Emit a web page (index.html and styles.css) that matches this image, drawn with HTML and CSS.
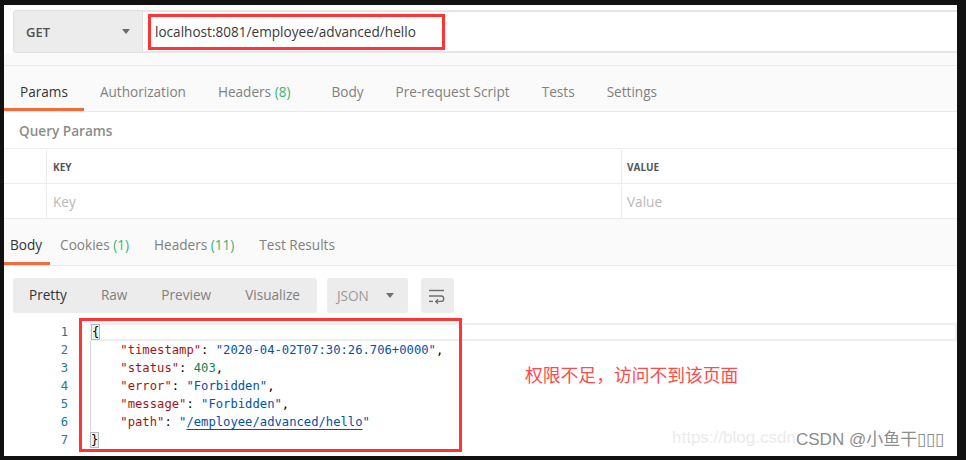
FILE: index.html
```html
<!DOCTYPE html>
<html lang="zh-CN">
<head>
    <meta charset="UTF-8">
    <title>Postman - 403</title>
    <link rel="stylesheet" href="styles.css">
</head>
<body>

<div class="app">
    <!-- request line -->
    <div class="request-bar">
        <div class="method">GET <span class="caret"></span></div>
        <div class="url">localhost:8081/employee/advanced/hello</div>
    </div>

    <div class="req-area">
        <div class="tabs req-tabs">
            <div class="tab active">Params</div>
            <div class="tab">Authorization</div>
            <div class="tab">Headers <span class="count">(8)</span></div>
            <div class="tab">Body</div>
            <div class="tab">Pre-request Script</div>
            <div class="tab">Tests</div>
            <div class="tab">Settings</div>
        </div>
    </div>

    <div class="query-title">Query Params</div>
    <div class="params-table">
        <div class="prow head">
            <div class="pcell check"></div>
            <div class="pcell key">KEY</div>
            <div class="pcell value">VALUE</div>
        </div>
        <div class="prow">
            <div class="pcell check"></div>
            <div class="pcell key placeholder">Key</div>
            <div class="pcell value placeholder">Value</div>
        </div>
    </div>

    <!-- response -->
    <div class="tabs res-tabs">
        <div class="tab active">Body</div>
        <div class="tab">Cookies <span class="count">(1)</span></div>
        <div class="tab">Headers <span class="count">(11)</span></div>
        <div class="tab">Test Results</div>
    </div>

    <div class="toolbar">
        <div class="view-group">
            <div class="view active">Pretty</div>
            <div class="view">Raw</div>
            <div class="view">Preview</div>
            <div class="view">Visualize</div>
        </div>
        <div class="format">JSON <span class="caret"></span></div>
        <div class="wrap-btn">
            <svg width="18" height="16" viewBox="0 0 18 16" fill="none" stroke="#707070" stroke-width="1.4">
                <path d="M1 2.5H16"/>
                <path d="M1 8H13a2.7 2.7 0 0 1 0 5.4H8"/>
                <path d="M10 11.2L7.8 13.4L10 15.6"/>
                <path d="M1 13.4H5"/>
            </svg>
        </div>
    </div>

    <div class="editor">
        <div class="gutter">
            <div>1</div><div>2</div><div>3</div><div>4</div><div>5</div><div>6</div><div>7</div>
        </div>
        <div class="code">
            <div class="line current"><span class="bracket">{</span></div>
            <div class="line guide">    <span class="k">"timestamp"</span>: <span class="s">"2020-04-02T07:30:26.706+0000"</span>,</div>
            <div class="line guide">    <span class="k">"status"</span>: <span class="n">403</span>,</div>
            <div class="line guide">    <span class="k">"error"</span>: <span class="s">"Forbidden"</span>,</div>
            <div class="line guide">    <span class="k">"message"</span>: <span class="s">"Forbidden"</span>,</div>
            <div class="line guide">    <span class="k">"path"</span>: <span class="s">"<span class="link">/employee/advanced/hello</span>"</span></div>
            <div class="line"><span class="bracket">}</span></div>
        </div>
    </div>

    <!-- annotations -->
    <div class="mark url-mark"></div>
    <div class="mark code-mark"></div>
    <div class="note">权限不足，访问不到该页面</div>
    <div class="wm-url">https://blog.csdn</div>
    <div class="wm-name">CSDN @小鱼干▯▯▯</div>
</div>

</body>
</html>
```

FILE: styles.css
```css
body {
    margin: 0;
    padding: 5px 9px 4px 4px;
    background-color: #111;
    font-family: "Open Sans", "Noto Sans", sans-serif;
    font-size: 13.6px;
    color: #808080;
    overflow: hidden;
}

.app {
    position: relative;
    height: 451px;
    background-color: #fff;
    overflow: hidden;
}

/* request line */
.request-bar {
    display: flex;
    height: 48px;
    padding-top: 5px;
    box-sizing: border-box;
}

.method {
    width: 130px;
    margin-left: 9px;
    display: flex;
    align-items: center;
    justify-content: space-between;
    padding: 0 12px;
    box-sizing: border-box;
    background-color: #ececec;
    border: 1px solid #e0e0e0;
    border-radius: 3px 0 0 3px;
    font-size: 13px;
    font-weight: 600;
    color: #505050;
}

.caret {
    width: 0;
    height: 0;
    border-left: 4px solid transparent;
    border-right: 4px solid transparent;
    border-top: 5px solid #6b6b6b;
}

.url {
    flex: 1;
    display: flex;
    align-items: center;
    padding-left: 12px;
    border-top: 2px solid #e6e6e6;
    border-bottom: 2px solid #e6e6e6;
    color: #3a3a3a;
}

/* tabs */
.req-area {
    background-color: #fafafa;
    padding-top: 12px;
}

.tabs {
    display: flex;
    background-color: #fafafa;
    border-top: 1px solid #ececec;
    border-bottom: 1px solid #e8e8e8;
}

.tab {
    height: 45px;
    padding: 17px 16px 0;
    box-sizing: border-box;
    line-height: 18px;
    border-bottom: 3px solid transparent;
    white-space: nowrap;
}

.tab.active {
    color: #333;
    border-bottom-color: #f26b3a;
}

.count {
    color: #3cb371;
}

.req-tabs .count {
    margin-right: 9px;
}

.res-tabs {
    border-top: none;
    height: 47px;
    box-sizing: border-box;
}

.res-tabs .tab {
    height: 46px;
    padding: 17px 8px 0;
    margin-right: 9px;
}

.res-tabs .tab.active {
    padding-left: 6px;
    margin-right: 2px;
}

/* query params */
.query-title {
    height: 37px;
    line-height: 37px;
    box-sizing: border-box;
    padding-left: 15px;
    font-weight: 600;
    color: #8c8c8c;
    border-bottom: 1px solid #ececec;
}

.prow {
    display: flex;
    height: 35px;
    padding-top: 1px;
    box-sizing: border-box;
    border-bottom: 1px solid #ececec;
}

.pcell {
    display: flex;
    align-items: center;
    box-sizing: border-box;
}

.pcell.check {
    width: 43px;
    border-right: 1px solid #ececec;
}

.pcell.key {
    width: 575px;
    padding-left: 6px;
    border-right: 1px solid #ececec;
}

.pcell.value {
    flex: 1;
    padding-left: 5px;
}

.head .pcell {
    font-size: 10px;
    font-weight: 700;
    color: #555;
}

.placeholder {
    color: #b8b8b8;
    padding-left: 8px;
}

/* response toolbar */
.toolbar {
    display: flex;
    height: 57px;
    padding: 12px 0 0 9px;
    box-sizing: border-box;
}

.view-group {
    display: flex;
    height: 35px;
    background-color: #ececec;
    border-radius: 3px;
}

.view {
    padding: 0 17px;
    line-height: 34px;
}

.view:first-child {
    padding-left: 16px;
}

.view.active {
    color: #333;
}

.format {
    width: 81px;
    height: 35px;
    margin-left: 10px;
    padding: 0 14px 0 10px;
    box-sizing: border-box;
    display: flex;
    align-items: center;
    justify-content: space-between;
    background-color: #ececec;
    border-radius: 3px;
    color: #9a9a9a;
}

.format .caret {
    border-top-color: #707070;
}

.wrap-btn {
    width: 33px;
    height: 35px;
    margin-left: 13px;
    display: flex;
    align-items: center;
    justify-content: center;
    background-color: #ececec;
    border-radius: 3px;
}

/* code editor */
.editor {
    display: flex;
    font-family: "DejaVu Sans Mono", "Liberation Mono", monospace;
    font-size: 12.2px;
    line-height: 18px;
}

.gutter {
    width: 64px;
    text-align: right;
    color: #237893;
}

.code {
    flex: 1;
    margin-left: 22px;
}

.line {
    height: 18px;
    padding-left: 1px;
    white-space: pre;
    color: #000;
}

.line.current {
    box-sizing: border-box;
    border: 2px solid #eeeeee;
    line-height: 14px;
    padding-left: 0;
}

.line.guide {
    box-shadow: inset 1px 0 0 #d6d6d6;
}

.bracket {
    outline: 1px solid #b9b9b9;
    background-color: rgba(0, 100, 0, 0.08);
}

.k { color: #a31515; }
.s { color: #0451a5; }
.n { color: #098658; }

.link {
    text-decoration: underline;
    text-underline-offset: 3px;
}

/* annotations over the screenshot */
.mark {
    position: absolute;
    border: 3px solid #ff3535;
    box-sizing: border-box;
}

.url-mark {
    left: 144px;
    top: 9px;
    width: 297px;
    height: 36px;
}

.code-mark {
    left: 75px;
    top: 313px;
    width: 383px;
    height: 134px;
}

.note {
    position: absolute;
    left: 521px;
    top: 359px;
    font-family: "Noto Sans CJK SC", sans-serif;
    font-size: 17.8px;
    line-height: 20px;
    color: #ff4a4a;
}

.wm-url {
    position: absolute;
    left: 668px;
    top: 423px;
    font-family: "Liberation Sans", Arial, sans-serif;
    font-size: 17px;
    line-height: 20px;
    color: #ebebeb;
    white-space: nowrap;
}

.wm-name {
    position: absolute;
    left: 792px;
    top: 425px;
    font-family: "Liberation Sans", "Noto Sans CJK SC", sans-serif;
    font-size: 17px;
    line-height: 20px;
    color: #8c8c8c;
    white-space: nowrap;
}
```
